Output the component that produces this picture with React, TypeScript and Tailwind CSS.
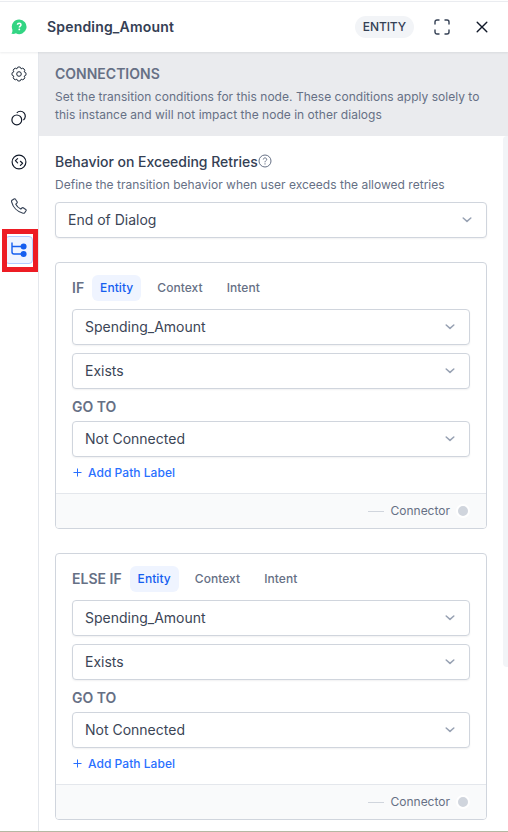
import React from "react";

function Chevron() {
  return (
    <svg width="10" height="6" viewBox="0 0 10 6" fill="none" stroke="#98a2b3" strokeWidth="1.5" strokeLinecap="round" strokeLinejoin="round">
      <path d="M1.2 1 5 4.4 8.8 1" />
    </svg>
  );
}

function Select({ value }: { value: string }) {
  return (
    <div className="flex h-9 items-center justify-between rounded-[4px] border border-[#d0d5dd] bg-white pr-[14px] pl-3 shadow-[0_1px_2px_rgba(16,24,40,0.06)]">
      <span className="text-[14px] leading-5 text-[#3b4556]">{value}</span>
      <Chevron />
    </div>
  );
}

function ConditionCard({ label }: { label: string }) {
  return (
    <section className="flex h-[267px] flex-col overflow-hidden rounded-[4px] border border-[#d0d5dd] bg-white">
      <div className="flex-1 px-4 pt-3">
        <div className="flex h-[26px] items-center gap-2 text-[12px] font-medium tracking-[0.06px] text-[#667085]">
          <span className="text-[14px] leading-5 font-semibold tracking-normal">{label}</span>
          <span className="flex h-[26px] items-center rounded-[6px] bg-[#eff4ff] px-2 text-[#155eef]">Entity</span>
          <span className="px-2">Context</span>
          <span className="px-2">Intent</span>
        </div>
        <div className="mt-2 flex flex-col gap-2">
          <Select value="Spending_Amount" />
          <Select value="Exists" />
        </div>
        <div className="mt-2 mb-1 text-[14px] leading-5 font-semibold text-[#667085]">GO TO</div>
        <Select value="Not Connected" />
        <div className="mt-[6px] flex h-5 items-center gap-[6px] pl-[1px] text-[12px] font-medium tracking-[0.04px] text-[#2970ff]">
          <svg className="mb-px" width="9" height="9" viewBox="0 0 9 9" stroke="currentColor" strokeWidth="1">
            <path d="M4.5 .5v8M.5 4.5h8" />
          </svg>
          <span>Add Path Label</span>
        </div>
      </div>
      <div className="flex h-[35px] shrink-0 items-center justify-end border-t border-[#e4e7ec] bg-[#f9fafb] pr-4">
        <span className="mr-[6px] h-px w-4 bg-[#d0d5dd]" />
        <span className="mr-[6px] text-[12px] text-[#667085]">Connector</span>
        <span className="size-[14px] rounded-full border-2 border-white bg-[#d0d5dd]" />
      </div>
    </section>
  );
}

function Sidebar() {
  return (
    <nav className="relative flex w-[39px] shrink-0 flex-col items-center border-r border-[#e4e7ec] pt-[8px]">
      <div className="flex h-[28px] items-center">
        <svg width="16" height="16" viewBox="0 0 16 16" fill="none" stroke="#1d2939" strokeWidth="1" strokeLinejoin="round">
          <path d="M13.170 5.860A2.150 2.150 0 0 1 13.170 10.140A2.150 2.150 0 0 1 10.140 13.170A2.150 2.150 0 0 1 5.860 13.170A2.150 2.150 0 0 1 2.830 10.140A2.150 2.150 0 0 1 2.830 5.860A2.150 2.150 0 0 1 5.860 2.830A2.150 2.150 0 0 1 10.140 2.830A2.150 2.150 0 0 1 13.170 5.860Z" />
          <circle cx="8" cy="8" r="2.300" />
        </svg>
      </div>
      <div className="mt-4 flex h-[28px] items-center">
        <svg width="16" height="16" viewBox="0 0 16 16" fill="none" stroke="#101828" strokeWidth="1.2">
          <circle cx="5.8" cy="9.900" r="4.900" />
          <path d="M5.800 2.800A4.900 4.900 0 1 1 12.400 10" />
        </svg>
      </div>
      <div className="mt-4 flex h-[28px] items-center">
        <svg width="16" height="16" viewBox="0 0 16 16" fill="none" stroke="#101828" strokeWidth="1.15" strokeLinecap="round" strokeLinejoin="round">
          <circle cx="8" cy="8" r="6.900" />
          <path d="M6.600 4.600 4.400 6.700l2.200 2.100M9.400 7.300l2.200 2-2.200 2.100" />
        </svg>
      </div>
      <div className="mt-4 flex h-[28px] items-center">
        <svg width="16" height="16" viewBox="0 0 16 16" fill="none" stroke="#344054" strokeWidth="1.15" strokeLinejoin="round">
          <path d="M1 2.3 3.1.9c.5-.3 1-.2 1.3.3l1.7 2.6c.3.5.2.9-.2 1.3L4.8 6.2c1 2 2.8 3.8 5 4.9l1.1-1.1c.4-.4.8-.5 1.3-.2l2.5 1.6c.5.3.6.8.3 1.3l-1.3 2c-.4.6-1 .7-1.7.5C6.2 13.8 1.900 9 .6 3.900.4 3.300.5 2.700 1 2.300Z" />
        </svg>
      </div>
      <div className="mt-4 flex size-[28px] items-center justify-center rounded-[4px] border border-[#b2ccff] bg-[#eff4ff]">
        <svg width="16" height="16" viewBox="0 0 16 16" fill="none" stroke="#155eef" strokeWidth="1.4">
          <path d="M1 .5V10a2 2 0 0 0 2 2h10M1 4.500h12" />
          <circle cx="12.600" cy="4.500" r="2.300" fill="#155eef" />
          <circle cx="12.600" cy="12" r="2.300" fill="#155eef" />
        </svg>
      </div>
      <div className="absolute top-[177px] left-[2px] h-[43px] w-9 border-[5px] border-[#ed1c24]" />
    </nav>
  );
}

export default function App() {
  return (
    <div className="flex h-[832px] w-[508px] flex-col overflow-hidden border-b border-[#b5b8a3] bg-white font-['Inter',sans-serif]">
      <header className="z-10 mt-px flex h-[51px] shrink-0 items-center border-t border-[#eaecf0] bg-white pl-[11px] shadow-[0_1px_2px_rgba(16,24,40,0.08)]">
        <svg width="16" height="16" viewBox="0 0 16 16">
          <path d="M8.200.500a7.300 7.300 0 1 1-3.300 13.800C3.700 15 2 15 .4 14.800 1.300 13.600 1.500 12.400 1.400 10.700A7.300 7.300 0 0 1 8.200.500Z" fill="#32d583" />
          <path d="M6.400 5.800c.1-1 .8-1.600 1.800-1.600 1.100 0 1.800.6 1.800 1.500 0 1.300-1.700 1.400-1.700 2.700" fill="none" stroke="white" strokeWidth="1.500" />
          <circle cx="8.300" cy="10.400" r=".9" fill="white" />
        </svg>
        <h1 className="ml-5 text-[14px] leading-5 font-semibold tracking-[0.18px] text-[#344054]">Spending_Amount</h1>
        <span className="ml-auto flex h-[22px] items-center rounded-full bg-[#f2f4f7] px-2 text-[12px] font-medium tracking-[-0.1px] text-[#344054]">ENTITY</span>
        <svg className="ml-5" width="16" height="16" viewBox="0 0 16 16" fill="none" stroke="#344054" strokeWidth="1.4" strokeLinecap="round">
          <path d="M1 5V3a2 2 0 0 1 2-2h2M11 1h2a2 2 0 0 1 2 2v2M15 11v2a2 2 0 0 1-2 2h-2M5 15H3a2 2 0 0 1-2-2v-2" />
        </svg>
        <svg className="mr-5 ml-[26px]" width="12" height="12" viewBox="0 0 12 12" fill="none" stroke="#101828" strokeWidth="1.400" strokeLinecap="round">
          <path d="m1.200 1.200 9.600 9.600M10.800 1.200l-9.600 9.600" />
        </svg>
      </header>
      <div className="flex min-h-0 flex-1">
        <Sidebar />
        <div className="flex min-w-0 flex-1 flex-col">
          <div className="h-[84px] shrink-0 bg-[#eaebee] px-4 pt-3">
            <h2 className="text-[14px] leading-5 font-semibold text-[#667085]">CONNECTIONS</h2>
            <p className="mt-1 text-[12px] leading-[18px] tracking-[0.022px] whitespace-nowrap text-[#667085]">
              Set the transition conditions for this node. These conditions apply solely to
              <br />
              this instance and will not impact the node in other dialogs
            </p>
          </div>
          <div className="flex min-h-0 flex-1">
            <main className="w-[464px] shrink-0 pr-4 pl-4">
              <div className="mt-4 flex h-5 items-center">
                <h3 className="text-[14px] leading-5 font-medium tracking-[-0.03px] text-[#344054]">Behavior on Exceeding Retries</h3>
                <svg className="mb-[2px]" width="14" height="14" viewBox="0 0 14 14" fill="none" stroke="#667085" strokeWidth="1">
                  <circle cx="7" cy="7" r="6" />
                  <path d="M5.300 5.500c.1-1 .8-1.600 1.700-1.600s1.700.6 1.700 1.500C8.700 6.700 7 6.700 7 8.300M7 9.300v1.200" />
                </svg>
              </div>
              <p className="mt-1 mb-2 text-[12px] leading-[18px] tracking-[0.015px] text-[#667085]">Define the transition behavior when user exceeds the allowed retries</p>
              <Select value="End of Dialog" />
              <div className="mt-6 flex flex-col gap-6">
                <ConditionCard label="IF" />
                <ConditionCard label="ELSE IF" />
              </div>
            </main>
            <div className="h-[531px] flex-1 rounded-l-[4px] bg-[#f2f4f7]" />
          </div>
        </div>
      </div>
    </div>
  );
}
